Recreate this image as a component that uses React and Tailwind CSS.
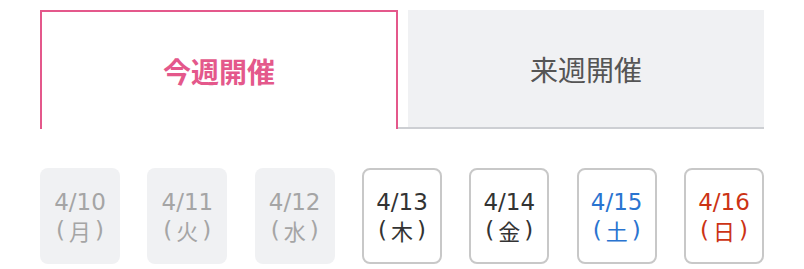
const days = [
  { date: '4/10', wd: '月', state: 'past' },
  { date: '4/11', wd: '火', state: 'past' },
  { date: '4/12', wd: '水', state: 'past' },
  { date: '4/13', wd: '木', state: 'normal' },
  { date: '4/14', wd: '金', state: 'normal' },
  { date: '4/15', wd: '土', state: 'sat' },
  { date: '4/16', wd: '日', state: 'sun' },
]

const textColor = {
  past: 'text-[#a5a5a5]',
  normal: 'text-[#333333]',
  sat: 'text-[#2a74d0]',
  sun: 'text-[#cc3314]',
}

function DayButton({ date, wd, state }) {
  const past = state === 'past'
  return (
    <div
      className={
        'w-[80px] h-[96px] rounded-lg flex flex-col items-center justify-center leading-[28px] text-[23px] ' +
        (past ? 'bg-[#f0f1f3] ' : 'bg-white border-2 border-[#c8c8c8] ') +
        textColor[state]
      }
    >
      <span>{date}</span>
      <span className="flex">
        <span>(</span>
        <span className="mx-[4px] text-[22px] font-['Noto_Sans_CJK_JP',sans-serif]">{wd}</span>
        <span>)</span>
      </span>
    </div>
  )
}

export default function App() {
  return (
    <div className="w-[804px] h-[269px] bg-white px-10 pt-[10px] font-['DejaVu_Sans','Noto_Sans_CJK_JP',sans-serif]">
      <div className="flex gap-[10px] border-b-2 border-[#cdcfd3]">
        <div className="w-[358px] h-[119px] -mb-[2px] border-2 border-b-0 border-[#e4588b] bg-white flex items-center justify-center">
          <span className="text-[28px] font-bold text-[#e4588b] font-['Noto_Sans_CJK_JP',sans-serif]">今週開催</span>
        </div>
        <div className="flex-1 h-[117px] bg-[#f0f1f3] flex items-center justify-center">
          <span className="text-[28px] text-[#555555] font-['Noto_Sans_CJK_JP',sans-serif]">来週開催</span>
        </div>
      </div>
      <div className="flex justify-between mt-[39px]">
        {days.map((d) => (
          <DayButton key={d.date} {...d} />
        ))}
      </div>
    </div>
  )
}
